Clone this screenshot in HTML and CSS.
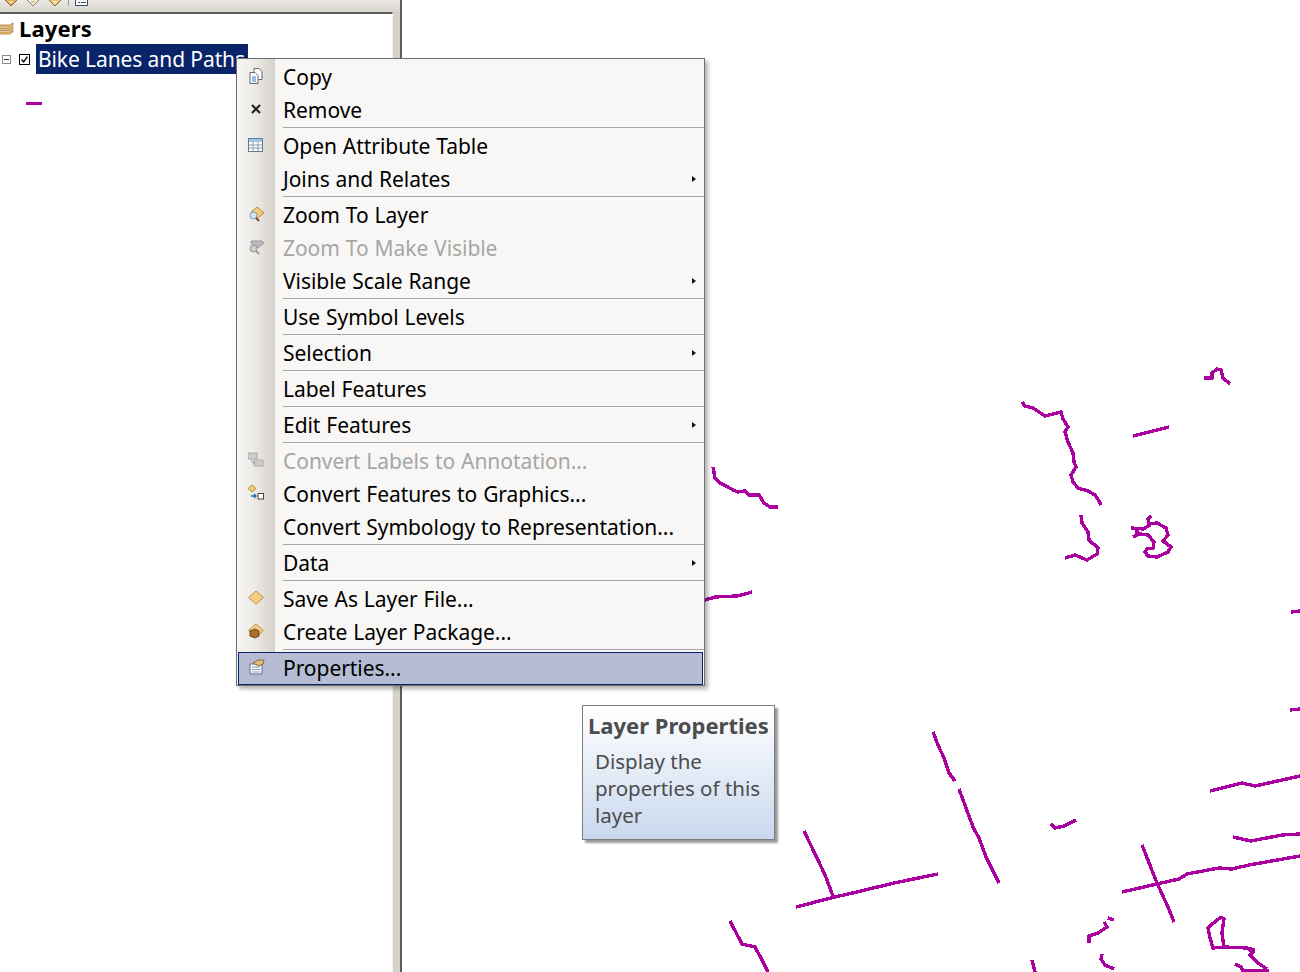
FILE: index.html
```html
<!DOCTYPE html>
<html lang="en">
<head>
<meta charset="utf-8">
<title>Layer context menu</title>
<link rel="stylesheet" href="styles.css">
</head>
<body>
<div class="app">
  <aside class="toc">
    <div class="toolbar">
      <svg class="tb-icon" viewBox="0 0 16 7"><path d="M2-4l6 0 6 4-6 6-6-6z" fill="#e6ad52" stroke="#7d6a4c"/><path d="M5 1h6L8 4z" fill="#f6dca6"/></svg>
      <svg class="tb-icon" viewBox="0 0 16 7"><path d="M2-4l6 0 6 4-6 6-6-6z" fill="#f1ece0" stroke="#8a8478"/><path d="M5 1h6L8 4z" fill="#e8c98c"/></svg>
      <svg class="tb-icon" viewBox="0 0 16 7"><path d="M2-4l6 0 6 4-6 6-6-6z" fill="#f0c477" stroke="#8a6a34"/><path d="M5 1h6L8 4z" fill="#f8e3b6"/></svg>
      <span class="tb-sep"></span>
      <svg class="tb-icon tb-last" viewBox="0 0 14 7"><path d="M.5 0v5.500h12V0" fill="#fff" stroke="#3d4a66"/><path d="M3 2.500h2M6 2.500h5" stroke="#3d4a66"/></svg>
    </div>
    <div class="tree">
      <div class="root-row">
        <svg class="layers-icon" viewBox="0 0 14 14"><path d="M-2 3h12l3-2v2l-3 2H-2zM-2 6.500h12l3-2v2l-3 2H-2zM-2 10h12l3-2v2l-3 2H-2z" fill="#f2c77c" stroke="#a77a36" stroke-width=".8"/></svg>
        <span class="root-label">Layers</span>
      </div>
      <div class="layer-row">
        <span class="expander"></span>
        <span class="check"><svg viewBox="0 0 11 11"><path d="M2 5.500l2.500 3L9 2" fill="none" stroke="#000" stroke-width="1.700"/></svg></span>
        <span class="layer-label">Bike Lanes and Paths</span>
      </div>
      <div class="legend-row"><span class="legend-swatch"></span></div>
    </div>
  </aside>
  <main class="map">
    <svg class="map-svg" viewBox="0 0 1300 972">
      <g class="routes">
        <path d="M713 467L715 478 720 483 728 487 733 490 738 492 745 491 749 495 759 495 764 503 770 507 778 507"/>
        <path d="M705 600L715 597 737 596 745 594 752 592"/>
        <path d="M1204 378L1212 378 1212 373 1217 369 1221 370 1223 378 1230 384"/>
        <path d="M1022 402L1025 406 1033 408 1039 412 1045 416 1053 414 1061 412 1063 419 1068 427 1065 432 1068 442 1073 453 1074 462 1076 467 1071 475 1073 482 1078 488 1088 491 1095 495 1099 501 1101 505"/>
        <path d="M1133 436L1169 427"/>
        <path d="M1081 515L1082 523 1088 532 1089 540 1098 548 1097 554 1087 560 1075 555 1065 558"/>
        <path d="M1151 516L1148 519 1149 524 1157 523 1166 528 1168 535 1163 541 1171 547 1168 552 1157 557 1148 556 1145 552 1147 549 1153 548 1154 542 1148 535 1140 534 1133 537"/>
        <path d="M1131 528L1143 529 1150 525M1137 529L1137 534"/>
        <path d="M1291 612L1300 611"/>
        <path d="M1290 710L1300 709"/>
        <path d="M1210 791L1242 783 1255 786 1300 776"/>
        <path d="M1233 837L1251 841 1282 835 1300 834"/>
        <path d="M1122 892L1157 884 1179 879 1187 874 1219 868 1232 869 1249 865 1300 856"/>
        <path d="M1142 845L1157 883 1168 907 1174 922"/>
        <path d="M933 732L938 745 944 758 949 773 955 781"/>
        <path d="M959 789L973 827 979 838 986 857 999 883"/>
        <path d="M804 831L817 858 825 875 833 896"/>
        <path d="M796 907L835 897 857 892 894 883 938 874"/>
        <path d="M1051 824L1055 828 1064 826 1076 820"/>
        <path d="M730 921L742 944 755 947 761 958 768 972"/>
        <path d="M1089 943L1089 936 1098 933 1107 927 1104 922M1108 918L1114 920"/>
        <path d="M1102 954L1101 959 1105 965 1114 969"/>
        <path d="M1032 960L1035 972"/>
        <path d="M1221 917L1224 919 1222 933 1224 947 1213 948 1210 938 1208 928 1211 925 1221 917"/>
        <path d="M1224 947L1247 948 1253 952 1250 955 1258 963 1267 969M1235 964L1241 967 1243 971 1269 971M1247 948L1255 950"/>
      </g>
    </svg>
  </main>
</div>

<nav class="menu">
  <div class="menu-group">
    <div class="item"><span class="item-icon"><svg viewBox="0 0 16 16"><path d="M6 .5h5l3 3v8H6z" fill="#fff" stroke="#667"/><path d="M2 4.500h5l3 3v8H2z" fill="#fff" stroke="#667"/><path d="M4 9h4M4 11h4M4 13h4" stroke="#3f7fc0"/></svg></span><span class="item-label">Copy</span></div>
    <div class="item"><span class="item-icon"><svg viewBox="0 0 16 16"><path d="M4 4l8 8M12 4l-8 8" stroke="#222" stroke-width="2.200"/></svg></span><span class="item-label">Remove</span></div>
  </div>
  <div class="menu-group">
    <div class="item"><span class="item-icon"><svg viewBox="0 0 16 16"><rect x=".5" y="1.500" width="14" height="13" fill="#fff" stroke="#667a90"/><path d="M1 2h13v3H1z" fill="#9fc2e6"/><path d="M1 8h13M1 11h13M5 5v9M10 5v9" stroke="#8a9aad"/></svg></span><span class="item-label">Open Attribute Table</span></div>
    <div class="item"><span class="item-icon"></span><span class="item-label">Joins and Relates</span><span class="arrow"></span></div>
  </div>
  <div class="menu-group">
    <div class="item"><span class="item-icon"><svg viewBox="0 0 16 16"><path d="M9 1l7 6-6 5-7-6z" fill="#f2ca7b" stroke="#b68d3f"/><circle cx="5.500" cy="9.500" r="3.500" fill="#cfe2f7" stroke="#7e9dc0"/><path d="M8 12l3 3" stroke="#8b3b2c" stroke-width="1.800"/></svg></span><span class="item-label">Zoom To Layer</span></div>
    <div class="item disabled"><span class="item-icon"><svg viewBox="0 0 16 16"><path d="M3 2h11l2 2-6 5-7-5z" fill="#bbb" stroke="#999"/><circle cx="5.500" cy="9.500" r="3.500" fill="#ccc" stroke="#999"/><path d="M8 12l3 3" stroke="#999" stroke-width="1.800"/></svg></span><span class="item-label">Zoom To Make Visible</span></div>
    <div class="item"><span class="item-icon"></span><span class="item-label">Visible Scale Range</span><span class="arrow"></span></div>
  </div>
  <div class="menu-group">
    <div class="item"><span class="item-icon"></span><span class="item-label">Use Symbol Levels</span></div>
  </div>
  <div class="menu-group">
    <div class="item"><span class="item-icon"></span><span class="item-label">Selection</span><span class="arrow"></span></div>
  </div>
  <div class="menu-group">
    <div class="item"><span class="item-icon"></span><span class="item-label">Label Features</span></div>
  </div>
  <div class="menu-group">
    <div class="item"><span class="item-icon"></span><span class="item-label">Edit Features</span><span class="arrow"></span></div>
  </div>
  <div class="menu-group">
    <div class="item disabled"><span class="item-icon"><svg viewBox="0 0 16 16"><path d="M0 1h9v6H0zM6 8h9v6H6z" fill="#ccc" stroke="#aaa"/><path d="M3 8l2 3h2" stroke="#999" fill="none"/></svg></span><span class="item-label">Convert Labels to Annotation...</span></div>
    <div class="item"><span class="item-icon"><svg viewBox="0 0 16 16"><path d="M4 0l4 3.500L4 7 0 3.500z" fill="#f2ca7b" stroke="#b68d3f"/><rect x="10" y="8.500" width="5.500" height="5.500" fill="#fff" stroke="#444"/><path d="M3 11h5M6 9l2 2-2 2" fill="none" stroke="#1f6ea8" stroke-width="1.300"/></svg></span><span class="item-label">Convert Features to Graphics...</span></div>
    <div class="item"><span class="item-icon"></span><span class="item-label">Convert Symbology to Representation...</span></div>
  </div>
  <div class="menu-group">
    <div class="item"><span class="item-icon"></span><span class="item-label">Data</span><span class="arrow"></span></div>
  </div>
  <div class="menu-group">
    <div class="item"><span class="item-icon"><svg viewBox="0 0 16 16"><path d="M8 1l7.500 6.500L8 14 .5 7.500z" fill="#f4cf83" stroke="#bb9245"/></svg></span><span class="item-label">Save As Layer File...</span></div>
    <div class="item"><span class="item-icon"><svg viewBox="0 0 16 16"><path d="M8 1l7.500 6.500L8 14 .5 7.500z" fill="#f4cf83" stroke="#bb9245"/><path d="M2 8l5-2 4 2v5l-4 2-5-2z" fill="#a8702c" stroke="#6e4518"/></svg></span><span class="item-label">Create Layer Package...</span></div>
  </div>
  <div class="item active"><span class="item-icon"><svg viewBox="0 0 16 16"><path d="M1 5h12v10H1z" fill="#f4f6fa" stroke="#5f6f86"/><path d="M3 8h8M3 10.500h8M3 13h8" stroke="#8aa0bb"/><path d="M4 4l5-3h6l-1 4-4 2z" fill="#e4bd74" stroke="#8a6a34"/></svg></span><span class="item-label">Properties...</span></div>
</nav>

<div class="tip">
  <div class="tip-title">Layer Properties</div>
  <div class="tip-body">Display the<br>properties of this<br>layer</div>
</div>
</body>
</html>
```
FILE: styles.css
```css
* { box-sizing: border-box; }
html, body { margin: 0; height: 100%; overflow: hidden; background: #fff; }
body { font-family: "Noto Sans", "Open Sans", sans-serif; color: #000; }

.app { display: flex; height: 972px; width: 1300px; }
.toc { width: 402px; flex: none; background: #d6d2ca; border-right: 2px solid #5e5e5e; display: flex; flex-direction: column; }
.toolbar { height: 12px; flex: none; background: linear-gradient(#ebe9e4, #d9d6cf); display: flex; align-items: flex-start; gap: 6px; padding-left: 3px; overflow: hidden; }
.tb-icon { width: 16px; height: 7px; flex: none; }
.tb-last { width: 14px; }
.tb-sep { width: 1px; height: 6px; background: #999; margin-left: -1px; }
.tree { flex: 1; background: #fff; border-top: 2px solid #5e5e5e; border-right: 1px solid #f4f3f0; margin-right: 7px; }
.root-row { height: 30px; display: flex; align-items: center; gap: 5px; }
.layers-icon { width: 14px; height: 14px; flex: none; }
.root-label { font-size: 22px; font-weight: 700; line-height: 30px; letter-spacing: .15px; padding-bottom: 3px; }
.layer-row { height: 30px; display: flex; align-items: center; }
.expander { width: 9px; height: 9px; margin-left: 2px; border: 1px solid #8a8a8a; flex: none; background: linear-gradient(#333, #333) center / 5px 1px no-repeat; }
.check { width: 11px; height: 11px; margin-left: 8px; border: 1px solid #000; flex: none; display: flex; }
.check svg { width: 100%; height: 100%; }
.layer-label { margin-left: 6px; background: #0a246a; color: #fff; font-size: 21px; letter-spacing: -.1px; line-height: 30px; height: 30px; padding: 0 2px; white-space: nowrap; min-width: 212px; }
.legend-row { padding: 28px 0 0 26px; }
.legend-swatch { display: block; width: 16px; height: 3px; background: #aa00a0; }

.map { flex: 1; position: relative; }
.map-svg { position: absolute; left: -402px; top: 0; width: 1300px; height: 972px; }
.routes { fill: none; stroke: #aa00a0; stroke-width: 3.400; stroke-linejoin: round; shape-rendering: crispEdges; }

.menu { position: absolute; left: 236px; top: 58px; width: 469px; height: 628px; background: linear-gradient(90deg, #f6f5f3 0, #eeece8 16px, #d6d2cb 38px, #f8f7f5 38px); border: 1px solid #6f6f6f; box-shadow: 3px 3px 4px rgba(0,0,0,.3); padding-top: 2px; }
.menu-group { border-bottom: 1px solid #a6a6a6; margin-left: 46px; margin-bottom: 2px; }
.menu-group .item { margin-left: -46px; }
.item { height: 33px; display: flex; align-items: center; font-size: 21px; letter-spacing: -.05px; word-spacing: .5px; position: relative; white-space: nowrap; }
.item-icon { width: 46px; flex: none; display: flex; justify-content: center; padding: 0 8px 3px 0; }
.item-icon svg { width: 16px; height: 16px; }
.item-label { line-height: 33px; padding-bottom: 1px; }
.disabled { color: #a6a6a6; }
.arrow { position: absolute; right: 8px; top: 13px; border-left: 4px solid #111; border-top: 3.500px solid transparent; border-bottom: 3.500px solid transparent; }
.active { background: #b5bcd3; outline: 1px solid #0a246a; outline-offset: -1px; margin: 0 1px; width: 465px; }
.active .item-icon { width: 45px; }

.tip { position: absolute; left: 582px; top: 705px; width: 193px; height: 135px; border: 1px solid #7d7d7d; background: linear-gradient(#ffffff, #c9d8ee); box-shadow: 3px 3px 2px rgba(0,0,0,.4); color: #4c4c4c; padding: 3px 0 0 5px; }
.tip-title { font-size: 22px; font-weight: 700; line-height: 32px; white-space: nowrap; }
.tip-body { font-size: 20.500px; line-height: 27px; padding: 7px 0 0 7px; white-space: nowrap; }
```
